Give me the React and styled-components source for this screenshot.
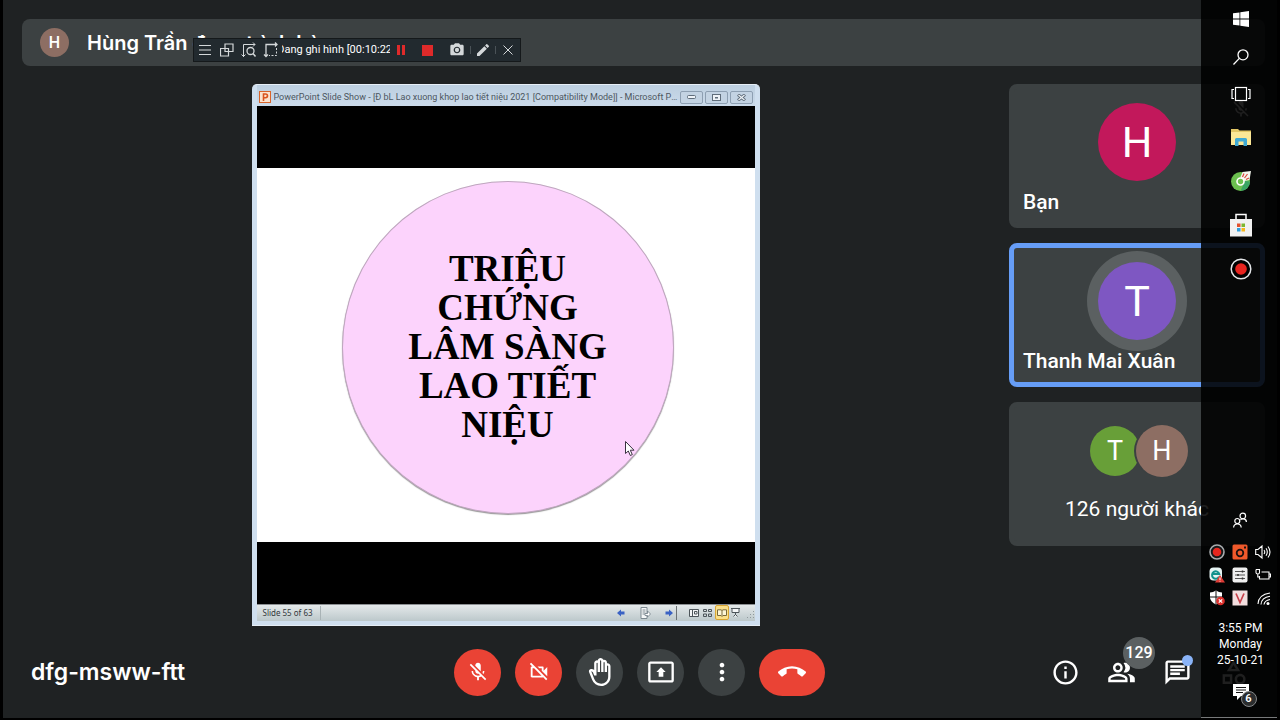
import React from 'react';

import styled, { createGlobalStyle } from 'styled-components';
import {
  MdMicOff,
  MdOutlineVideocamOff,
  MdOutlineBackHand,
  MdOutlinePresentToAll,
  MdMoreVert,
  MdCallEnd,
  MdOutlineInfo,
  MdOutlinePeopleAlt,
  MdOutlineChat,
  MdOutlineCategory,
  MdPhotoCamera,
  MdEdit
} from 'react-icons/md';

const GlobalStyle = createGlobalStyle`
  * {
    box-sizing: border-box;
  }
  body {
    margin: 0;
    background: #000000;
    font-family: Roboto, "Noto Sans", sans-serif;
    color: #ffffff;
  }
  button {
    padding: 0;
    border: 0;
    background: none;
    color: inherit;
    font: inherit;
    cursor: pointer;
  }
  svg {
    display: block;
  }
`

const Screen = styled.div`
  position: relative;
  display: flex;
  flex-direction: column;
  min-height: 100vh;
  padding-top: 19px;
  border: solid #000000;
  border-width: 0 3px 2px;
  background: #1f2223;
  overflow: hidden;
`

/* ---------- meeting ---------- */

const Header = styled.header`
  display: flex;
  align-items: center;
  gap: 18px;
  height: 47px;
  margin: 0 12px 18px 19px;
  padding-left: 18px;
  border-radius: 8px;
  background: #3c4142;
`

const Presenter = styled.h1`
  margin: 0;
  font-family: Inter, sans-serif;
  font-size: 20px;
  font-weight: 600;
  line-height: 24px;
`

const Avatar = styled.span`
  display: flex;
  align-items: center;
  justify-content: center;
  flex: none;
  width: ${props => props.$size}px;
  height: ${props => props.$size}px;
  border-radius: 50%;
  background: ${props => props.$color};
  box-shadow: ${props => props.$ring || 'none'};
  font-size: ${props => props.$font}px;
  font-weight: ${props => props.$weight || 400};
`

const Stage = styled.main`
  display: flex;
  flex: 1;
  align-items: flex-start;
  gap: 20px;
  padding: 0 12px 0 19px;
`

const Presentation = styled.section`
  display: flex;
  flex: 1;
  justify-content: center;
  min-width: 0;
`

const People = styled.ul`
  display: flex;
  flex-direction: column;
  gap: 15px;
  width: 256px;
  margin: 0;
  padding: 0;
  list-style: none;
`

const Tile = styled.li`
  position: relative;
  display: flex;
  flex-direction: column;
  align-items: center;
  height: 144px;
  padding: 14px 9px 0;
  border: 5px solid ${props => (props.$speaking ? '#669df6' : '#3c4142')};
  border-radius: 8px;
  background: #3c4142;
`

const TileName = styled.span`
  align-self: flex-start;
  margin-top: 9px;
  font-size: 21px;
  font-weight: 500;
  line-height: 24px;
`

const TileMic = styled.span`
  position: absolute;
  top: 10px;
  right: 9px;
  font-size: 20px;
`

const Others = styled.div`
  display: flex;
  align-items: center;
  padding: 4px 0 20px 4px;

  > :last-child {
    margin-left: -4px;
  }
`

const OthersLabel = styled.span`
  font-size: 21px;
  line-height: 24px;
`

const Footer = styled.footer`
  display: grid;
  grid-template-columns: 1fr auto 1fr;
  align-items: center;
  height: 92px;
  padding: 0 16px 0 28px;
`

const Code = styled.span`
  font-family: Inter, sans-serif;
  font-size: 23px;
  font-weight: 600;
  line-height: 24px;
`

const Controls = styled.div`
  display: flex;
  gap: 14px;
  padding-right: 13px;
`

const Control = styled.button`
  display: flex;
  align-items: center;
  justify-content: center;
  width: ${props => (props.$wide ? 66 : 47)}px;
  height: 47px;
  border-radius: 24px;
  background: ${props => (props.$danger ? '#ea4335' : '#3c4142')};
  font-size: ${props => props.$icon || 22}px;
`

const Actions = styled.div`
  display: flex;
  justify-content: flex-end;
`

const Action = styled.button`
  position: relative;
  display: flex;
  align-items: center;
  justify-content: center;
  width: 56px;
  height: 56px;
  font-size: 29px;
`

const CountBadge = styled.span`
  position: absolute;
  top: -7px;
  left: 30px;
  width: 32px;
  height: 32px;
  border-radius: 50%;
  background: #5b6061;
  font-size: 16px;
  font-weight: 500;
  line-height: 32px;
  text-align: center;
`

const DotBadge = styled.span`
  position: absolute;
  top: 11px;
  left: 33px;
  width: 11px;
  height: 11px;
  border-radius: 50%;
  background: #8ab4f8;
`

/* ---------- slide show window ---------- */

const Window = styled.div`
  width: 508px;
  padding: 0 5px 4px;
  border: 1px solid #e6eef6;
  border-width: 1px 0 1px;
  border-radius: 5px 5px 0 0;
  background: #cfdfef;
  color: #4c5660;
  font-family: "Noto Sans", sans-serif;
`

const TitleBar = styled.div`
  display: flex;
  align-items: center;
  height: 21px;
  padding: 3px 2px 0;
  background: linear-gradient(#bccfe0, #cbdaea);
`

const Title = styled.span`
  flex: 1;
  min-width: 0;
  margin: 0 2px 0 3px;
  overflow: hidden;
  font-family: Roboto, sans-serif;
  font-size: 9px;
  line-height: 14px;
  text-overflow: ellipsis;
  white-space: nowrap;
`

const WindowButtons = styled.div`
  display: flex;
  gap: 2px;
`

const WindowButton = styled.button`
  display: flex;
  align-items: center;
  justify-content: center;
  width: 23px;
  height: 13px;
  border: 1px solid #8d9fb2;
  border-radius: 2px;
  background: #c3d3e3;
`

const Letterbox = styled.div`
  padding: 62px 0;
  border-bottom: 1px solid #8b8f92;
  background: #000000;
`

const Slide = styled.div`
  position: relative;
  display: flex;
  align-items: flex-start;
  justify-content: center;
  aspect-ratio: 4 / 3;
  padding: 13px 0 0 4px;
  background: #ffffff;
`

const Bubble = styled.div`
  display: flex;
  align-items: center;
  justify-content: center;
  width: 332px;
  height: 333px;
  padding-bottom: 2px;
  border: 1px solid #bfa6bf;
  border-radius: 50%;
  background: #fcd3fc;
  box-shadow: 0 1px 1px rgba(0, 0, 0, 0.4);
`

const SlideTitle = styled.h2`
  margin: 0;
  color: #000000;
  font-family: "Liberation Serif", serif;
  font-size: 37px;
  font-weight: 700;
  line-height: 39px;
  text-align: center;
`

const Pointer = styled.svg`
  position: absolute;
  top: 273px;
  left: 368px;
`

const StatusBar = styled.div`
  display: flex;
  align-items: center;
  height: 16px;
  padding-left: 6px;
  background: linear-gradient(#e4e9ea, #bcc8cb);
  color: #33383c;
  font-size: 8px;
`

const SlideCount = styled.span`
  padding-right: 7px;
  border-right: 1px solid #a9b3b6;
  line-height: 14px;
`

const StatusTools = styled.div`
  display: flex;
  align-items: center;
  margin-left: auto;
`

const StatusButton = styled.button`
  display: flex;
  align-items: center;
  justify-content: center;
  width: ${props => props.$width || 14}px;
  height: 15px;
  border: 1px solid ${props => (props.$on ? '#d9a532' : 'transparent')};
  border-radius: 2px;
  background: ${props => (props.$on ? '#fbe08a' : 'none')};
`

const StatusRule = styled.span`
  width: 1px;
  height: 14px;
  margin: 0 10px 0 -3px;
  background: #6b7275;
`

/* ---------- recorder ---------- */

const Recorder = styled.div`
  position: absolute;
  top: 39px;
  left: 191px;
  display: flex;
  align-items: center;
  height: 22px;
  outline: 1px solid #15191b;
  background: #222a2f;
  color: #d4d8da;
`

const RecorderButton = styled.button`
  display: flex;
  align-items: center;
  justify-content: center;
  width: ${props => props.$width || 22}px;
  height: 22px;
  font-size: 16px;
`

const RecorderTime = styled.div`
  display: flex;
  justify-content: center;
  width: 108px;
  overflow: hidden;
  color: #ffffff;
  font-size: 11px;
  line-height: 20px;
  white-space: nowrap;
`

const RecorderRule = styled.span`
  width: 1px;
  height: 8px;
  background: #4a5257;
`

/* ---------- taskbar ---------- */

const Taskbar = styled.nav`
  position: absolute;
  top: 0;
  right: -3px;
  bottom: 0;
  display: flex;
  flex-direction: column;
  align-items: center;
  width: 79px;
  border-bottom: 1px solid #77797a;
  background: rgba(0, 0, 0, 0.88);
`

const TaskButton = styled.button`
  display: flex;
  align-items: center;
  justify-content: center;
  width: 44px;
  height: ${props => props.$height}px;
`

const Tray = styled.div`
  display: grid;
  grid-template-columns: repeat(3, 23px);
  grid-template-rows: 41px;
  grid-auto-rows: 23px;
  margin-top: auto;
  padding-right: 2px;
`

const TrayButton = styled.button`
  display: flex;
  align-items: center;
  justify-content: center;
`

const TrayPeople = styled(TrayButton)`
  grid-column: 1 / -1;
`

const Clock = styled.time`
  margin-top: 11px;
  font-size: 12px;
  line-height: 16px;
  text-align: center;
`

const Notices = styled.button`
  position: relative;
  margin: 16px 0 17px;
`

const NoticeCount = styled.span`
  position: absolute;
  top: 7px;
  left: 8px;
  width: 16px;
  height: 16px;
  border: 1px solid #85888a;
  border-radius: 50%;
  background: #2b2d2e;
  font-size: 11px;
  font-weight: 600;
  line-height: 14px;
`

const stroke = { fill: 'none', stroke: 'currentColor' };

const WindowsIcon = () => (
  <svg width="16" height="16" viewBox="0 0 16 16" fill="#ffffff">
    <path d="M0 2.3L6.5 1.4V7.6H0zM7.3 1.3L16 0V7.6H7.3zM0 8.4H6.5V14.6L0 13.7zM7.3 8.4H16V16L7.3 14.7z" />
  </svg>
)

const SearchIcon = () => (
  <svg width="16" height="16" viewBox="0 0 16 16" {...stroke} strokeWidth="1.3">
    <circle cx="10" cy="5.8" r="5" />
    <path d="M6.3 9.4L.5 15.5" />
  </svg>
)

const TaskViewIcon = () => (
  <svg width="20" height="16" viewBox="0 0 20 16" {...stroke} strokeWidth="1.2">
    <rect x="4.5" y="1.5" width="11" height="13" />
    <path d="M3 3.5H1V12.5H3M17 3.5H19V12.5H17" />
  </svg>
)

const FolderIcon = () => (
  <svg width="20" height="18" viewBox="0 0 20 18">
    <path d="M0 1H7L8.5 2.5H20V17H0z" fill="#e3c766" />
    <path d="M0 4H20V17H0z" fill="#fbe796" />
    <path d="M4 18V11.5Q4 10 5.500 10H14.5Q16 10 16 11.500V18H12.500V13.500H7.500V18z" fill="#3fa9d4" />
  </svg>
)

const CocCocIcon = () => (
  <svg width="20" height="20" viewBox="0 0 20 20">
    <circle cx="9.500" cy="10.500" r="9.500" fill="#6cc04f" />
    <path d="M9.500 20A9.500 9.500 0 0 0 19 10.500L14 10z" fill="#3aa564" />
    <path d="M9.500 6L11.500 1L20 0L18.500 9L13 10z" fill="#f4f6ee" />
    <path d="M11.500 6L13 2.500M13.500 7L16.500 3M15 8.500L18 7" stroke="#d8453a" strokeWidth="1.200" />
    <circle cx="9.500" cy="10.500" r="3.500" fill="#6fc24f" stroke="#ffffff" strokeWidth="1.600" />
  </svg>
)

const StoreIcon = () => (
  <svg width="22" height="24" viewBox="0 0 22 24">
    <path d="M6 7V1.500H16V7" fill="none" stroke="#ffffff" strokeWidth="1.500" />
    <path d="M0 6H22V23.500H0z" fill="#f1f1f1" />
    <path d="M7 10.500H10.500V14H7z" fill="#e2512d" />
    <path d="M11.500 10.500H15V14H11.500z" fill="#7db72f" />
    <path d="M7 15H10.500V18.500H7z" fill="#2f9fdc" />
    <path d="M11.500 15H15V18.500H11.500z" fill="#f6b71c" />
  </svg>
)

const RecordIcon = () => (
  <svg width="22" height="22" viewBox="0 0 22 22">
    <circle cx="11" cy="11" r="9.800" fill="#000000" stroke="#e4e6e8" strokeWidth="1.500" />
    <circle cx="11" cy="11" r="5.800" fill="#e8241f" />
  </svg>
)

const PeopleIcon = () => (
  <svg width="14" height="16" viewBox="0 0 14 16" {...stroke} strokeWidth="1.200">
    <circle cx="9.800" cy="4" r="2.800" />
    <circle cx="4.300" cy="9" r="2.500" />
    <path d="M.6 15.500C.8 10.800 8 10.800 8.200 15.500M7.500 8C9 5.800 13.400 6.500 13.400 10" />
  </svg>
)

const trayIcons = [
  { label: 'Recorder', art: (
    <>
      <circle cx="8" cy="8" r="7" fill="#17191a" stroke="#a9acae" strokeWidth="1.600" />
      <circle cx="8" cy="8" r="4.300" fill="#e5261e" />
    </>
  ) },
  { label: 'Capture', art: (
    <>
      <rect x=".5" y=".5" width="15" height="15" rx="1.500" fill="#f0592b" />
      <circle cx="8" cy="9" r="3.300" fill="none" stroke="#1c1210" strokeWidth="1.800" />
      <path d="M12 2.500H14V4.500H12z" fill="#1c1210" />
    </>
  ) },
  { label: 'Volume', art: (
    <path d="M.7 5.500H3L7 2V14L3 10.500H.7zM9 6Q10.500 8 9 10M11 4.300Q13.600 8 11 11.700M13 2.500Q17 8 13 13.500" {...stroke} strokeWidth="1.100" />
  ) },
  { label: 'Security alert', art: (
    <>
      <rect x=".5" y=".5" width="12.500" height="13" rx="4" fill="#e6f4f3" />
      <path d="M10 9.800A3.700 3.700 0 1 1 10.300 7H4" fill="none" stroke="#12928e" strokeWidth="2" />
      <path d="M11 8L16 15.500H6z" fill="#df3b35" />
      <path d="M11 10.500V13M11 13.800V14.600" stroke="#ffffff" />
    </>
  ) },
  { label: 'Audio mixer', art: (
    <>
      <rect x=".5" y=".5" width="15" height="15" rx="2" fill="#efefef" />
      <path d="M3 4.500H13M3 8H13M3 11.500H13" stroke="#555555" strokeWidth="1.100" />
      <path d="M10.500 3.500V5.500M6 7V9M10.500 10.500V12.500" stroke="#333333" strokeWidth="1.500" />
    </>
  ) },
  { label: 'Battery', art: (
    <path d="M6.500 5H14V12H4.500V9M14 7H15.500V10H14M1 2.500V5.500Q1 7 2.800 7Q4.500 7 4.500 5.500V2.500H1M2.800 7V10H4.500" {...stroke} strokeWidth="1.100" />
  ) },
  { label: 'Windows Security', art: (
    <>
      <path d="M7 .5Q10 2.500 13 2.500V8Q12 12 7 14.500Q2 12 1 8V2.500Q4 2.500 7 .5z" fill="#ffffff" />
      <path d="M7 .5V14.500M1 7H13" stroke="#111111" />
      <circle cx="11.500" cy="11" r="4.300" fill="#dc2f2b" />
      <path d="M9.800 9.300L13.200 12.700M13.200 9.300L9.800 12.700" stroke="#ffffff" strokeWidth="1.200" />
    </>
  ) },
  { label: 'Keyboard', art: (
    <>
      <rect x=".5" y=".5" width="15" height="15" fill="#f3dfdf" />
      <path d="M4 3.500L8 12.500L12 3.500" fill="none" stroke="#c8404a" strokeWidth="1.700" />
    </>
  ) },
  { label: 'Network', art: (
    <>
      <path d="M3 14Q3.500 4.500 15 3M6 14.500Q6.500 7.500 15 6.300M9 14.500Q9.500 10.500 15 9.500" {...stroke} strokeWidth="1.100" />
      <circle cx="13" cy="13.500" r="1.500" fill="#ffffff" />
    </>
  ) }
]

const tasks = [
  { label: 'Start', height: 38, Icon: WindowsIcon },
  { label: 'Search', height: 37, Icon: SearchIcon },
  { label: 'Task View', height: 38, Icon: TaskViewIcon },
  { label: 'File Explorer', height: 48, Icon: FolderIcon },
  { label: 'Cốc Cốc', height: 40, Icon: CocCocIcon },
  { label: 'Microsoft Store', height: 48, Icon: StoreIcon },
  { label: 'Screen Recorder', height: 40, Icon: RecordIcon }
]

const RecorderBar = () => (
  <Recorder>
    <RecorderButton aria-label="Menu">
      <svg width="12" height="12" viewBox="0 0 12 12" {...stroke}>
        <path d="M0 1.500H12M0 6H12M0 10.500H12" />
      </svg>
    </RecorderButton>
    <RecorderButton aria-label="Windows">
      <svg width="14" height="14" viewBox="0 0 14 14" {...stroke}>
        <path d="M.5 5.500H8.500V13H.5zM5 1H13V8.500H5z" strokeWidth="1.200" />
      </svg>
    </RecorderButton>
    <RecorderButton aria-label="Zoom area">
      <svg width="16" height="16" viewBox="0 0 16 16" {...stroke}>
        <path d="M2.500 15V2.500H14M.5 12.500L2.500 14.500L4.500 12.500M12 .5L14 2.500L12 4.500" />
        <circle cx="9.500" cy="9" r="3.500" strokeWidth="1.300" />
        <path d="M12 11.500L14.500 14.500" strokeWidth="1.500" />
      </svg>
    </RecorderButton>
    <RecorderButton aria-label="Select area">
      <svg width="16" height="16" viewBox="0 0 16 16" {...stroke}>
        <path d="M3 15V2.500H14M1 12.500L3 14.500L5 12.500M12 .5L14 2.500L12 4.500" strokeWidth="1.300" />
        <path d="M13.500 6V13.500H6" strokeDasharray="2 1.500" />
      </svg>
    </RecorderButton>
    <RecorderTime><span>Đang ghi hình [00:10:22]</span></RecorderTime>
    <RecorderButton aria-label="Pause">
      <svg width="8" height="10" viewBox="0 0 8 10" fill="#df2a2a">
        <path d="M0 0H3V10H0zM5 0H8V10H5z" />
      </svg>
    </RecorderButton>
    <RecorderButton $width={31} aria-label="Stop">
      <svg width="11" height="11" viewBox="0 0 11 11" fill="#df2a2a">
        <path d="M0 0H11V11H0z" />
      </svg>
    </RecorderButton>
    <RecorderButton $width={27} aria-label="Screenshot"><MdPhotoCamera /></RecorderButton>
    <RecorderRule />
    <RecorderButton $width={24} aria-label="Draw"><MdEdit /></RecorderButton>
    <RecorderRule />
    <RecorderButton $width={24} aria-label="Close">
      <svg width="10" height="10" viewBox="0 0 10 10" {...stroke}>
        <path d="M.5 .5L9.500 9.500M9.500 .5L.5 9.500" />
      </svg>
    </RecorderButton>
  </Recorder>
)

const SlideShow = () => (
  <Window>
    <TitleBar>
      <svg width="12" height="12" viewBox="0 0 12 12">
        <rect x=".5" y=".5" width="11" height="11" fill="#fbe3cf" stroke="#d9642a" />
        <path d="M4.500 10V3H6.500Q8.500 3 8.500 4.800Q8.500 6.700 6.500 6.700H4.500" fill="none" stroke="#d9541e" strokeWidth="1.600" />
      </svg>
      <Title>PowerPoint Slide Show - [Đ bL Lao xuong khop lao tiết niệu 2021 [Compatibility Mode]] - Microsoft PowerPoint</Title>
      <WindowButtons>
        <WindowButton aria-label="Minimize">
          <svg width="9" height="4" viewBox="0 0 9 4">
            <rect x=".5" y=".5" width="8" height="3" rx="1" fill="#eef3f8" stroke="#5f6d7b" />
          </svg>
        </WindowButton>
        <WindowButton aria-label="Restore">
          <svg width="9" height="7" viewBox="0 0 9 7">
            <rect x=".5" y=".5" width="8" height="6" fill="#eef3f8" stroke="#5f6d7b" />
            <path d="M3 3H6V4.500H3z" fill="#5f6d7b" />
          </svg>
        </WindowButton>
        <WindowButton aria-label="Close">
          <svg width="9" height="7" viewBox="0 0 9 7">
            <path d="M1 .5L8 6.500M8 .5L1 6.500" stroke="#5f6d7b" strokeWidth="3" />
            <path d="M1.500 1L7.500 6M7.500 1L1.500 6" stroke="#eef3f8" strokeWidth="1.200" />
          </svg>
        </WindowButton>
      </WindowButtons>
    </TitleBar>
    <Letterbox>
      <Slide>
        <Bubble>
          <SlideTitle>
            TRIỆU<br />CHỨNG<br />LÂM SÀNG<br />LAO TIẾT<br />NIỆU
          </SlideTitle>
        </Bubble>
        <Pointer width="10" height="16" viewBox="0 0 10 16">
          <path d="M.5 .5V12.500L3.300 10L5.300 14.500L7.300 13.600L5.300 9.200H9z" fill="#ffffff" stroke="#3a3040" />
        </Pointer>
      </Slide>
    </Letterbox>
    <StatusBar>
      <SlideCount>Slide 55 of 63</SlideCount>
      <StatusTools>
        <StatusButton $width={24} aria-label="Previous slide">
          <svg width="8" height="8" viewBox="0 0 8 8"><path d="M0 4L4 .5V2.500H7.500V5.500H4V7.500z" fill="#3a62c4" /></svg>
        </StatusButton>
        <StatusButton $width={26} aria-label="Slide menu">
          <svg width="11" height="12" viewBox="0 0 11 12">
            <path d="M1 .5H7V11.500H1z" fill="#f6f8f9" stroke="#7c8890" />
            <path d="M2.500 3H5.500M2.500 5H5.500M2.500 7H5.500" stroke="#7c8890" />
            <path d="M5 6.500H7.500V4L10.500 7L7.500 10V8.500H5z" fill="#ffffff" stroke="#6f7c86" strokeWidth=".8" />
          </svg>
        </StatusButton>
        <StatusButton $width={20} aria-label="Next slide">
          <svg width="8" height="8" viewBox="0 0 8 8"><path d="M8 4L4 .5V2.500H.5V5.500H4V7.500z" fill="#3a62c4" /></svg>
        </StatusButton>
        <StatusRule />
        <StatusButton aria-label="Normal">
          <svg width="10" height="8" viewBox="0 0 10 8" fill="#f4f6f7" stroke="#4d555a"><path d="M.5 .5H9.500V7.500H.5zM3.500 .5V7.500M5.500 2.500H8V5H5.500z" /></svg>
        </StatusButton>
        <StatusButton aria-label="Slide sorter">
          <svg width="9" height="8" viewBox="0 0 9 8" fill="none" stroke="#4d555a"><path d="M.5 .5H3.500V2.500H.5zM5.500 .5H8.500V2.500H5.500zM.5 5H3.500V7.500H.5zM5.500 5H8.500V7.500H5.500z" /></svg>
        </StatusButton>
        <StatusButton $on aria-label="Reading view">
          <svg width="10" height="8" viewBox="0 0 10 8" fill="#fdf6d8" stroke="#7a6a3a"><path d="M.5 .8H4L5 1.500L6 .8H9.500V6.500H6L5 7.500L4 6.500H.5zM5 1.500V7" /></svg>
        </StatusButton>
        <StatusButton aria-label="Slide show">
          <svg width="9" height="9" viewBox="0 0 9 9" fill="#f4f6f7" stroke="#4d555a"><path d="M0 .5H9M1 .5V4.500H8V.5M4.500 4.500V7M2.500 8.500L4.500 6.500L6.500 8.500" /></svg>
        </StatusButton>
        <svg width="12" height="14" viewBox="0 0 12 14" fill="#8f999d">
          <path d="M10 5H11V6H10zM10 8H11V9H10zM7 8H8V9H7zM10 11H11V12H10zM7 11H8V12H7zM4 11H5V12H4z" />
        </svg>
      </StatusTools>
    </StatusBar>
  </Window>
)

const App = () => (
  <>
    <GlobalStyle />
    <Screen>
      <Header>
        <Avatar $size={29} $font={16} $weight={500} $color="#8d6e63">H</Avatar>
        <Presenter>Hùng Trần đang trình bày</Presenter>
      </Header>

      <Stage>
        <Presentation>
          <SlideShow />
        </Presentation>
        <People>
          <Tile>
            <Avatar $size={78} $font={43} $color="#c2185b">H</Avatar>
            <TileName>Bạn</TileName>
            <TileMic><MdMicOff /></TileMic>
          </Tile>
          <Tile $speaking>
            <Avatar $size={78} $font={43} $color="#7e57c2" $ring="0 0 0 11px #5b6061">T</Avatar>
            <TileName>Thanh Mai Xuân</TileName>
          </Tile>
          <Tile>
            <Others>
              <Avatar $size={50} $font={27} $color="#689f38">T</Avatar>
              <Avatar $size={52} $font={27} $color="#8d6e63" $ring="-2px 0 0 #3c4142">H</Avatar>
            </Others>
            <OthersLabel>126 người khác</OthersLabel>
          </Tile>
        </People>
      </Stage>

      <Footer>
        <Code>dfg-msww-ftt</Code>
        <Controls>
          <Control $danger aria-label="Turn on microphone"><MdMicOff /></Control>
          <Control $danger aria-label="Turn on camera"><MdOutlineVideocamOff /></Control>
          <Control $icon={28} aria-label="Raise hand"><MdOutlineBackHand /></Control>
          <Control $icon={28} aria-label="Present now"><MdOutlinePresentToAll /></Control>
          <Control $icon={28} aria-label="More options"><MdMoreVert /></Control>
          <Control $danger $wide $icon={28} aria-label="Leave call"><MdCallEnd /></Control>
        </Controls>
        <Actions>
          <Action aria-label="Meeting details"><MdOutlineInfo /></Action>
          <Action aria-label="Show everyone">
            <MdOutlinePeopleAlt />
            <CountBadge>129</CountBadge>
          </Action>
          <Action aria-label="Chat">
            <MdOutlineChat />
            <DotBadge />
          </Action>
          <Action aria-label="Activities"><MdOutlineCategory /></Action>
        </Actions>
      </Footer>

      <RecorderBar />

      <Taskbar>
        {tasks.map(({ label, height, Icon }) => (
          <TaskButton key={label} $height={height} aria-label={label}><Icon /></TaskButton>
        ))}
        <Tray>
          <TrayPeople aria-label="People"><PeopleIcon /></TrayPeople>
          {trayIcons.map(({ label, art }) => (
            <TrayButton key={label} aria-label={label}>
              <svg width="16" height="16" viewBox="0 0 16 16">{art}</svg>
            </TrayButton>
          ))}
        </Tray>
        <Clock dateTime="2021-10-25T15:55">3:55 PM<br />Monday<br />25-10-21</Clock>
        <Notices aria-label="6 notifications">
          <svg width="16" height="16" viewBox="0 0 16 16">
            <path d="M0 0H16V12H8L4 16V12H0z" fill="#ffffff" />
            <path d="M3 3.500H13M3 6H13M3 8.500H10" stroke="#111111" />
          </svg>
          <NoticeCount>6</NoticeCount>
        </Notices>
      </Taskbar>
    </Screen>
  </>
)

export default App
